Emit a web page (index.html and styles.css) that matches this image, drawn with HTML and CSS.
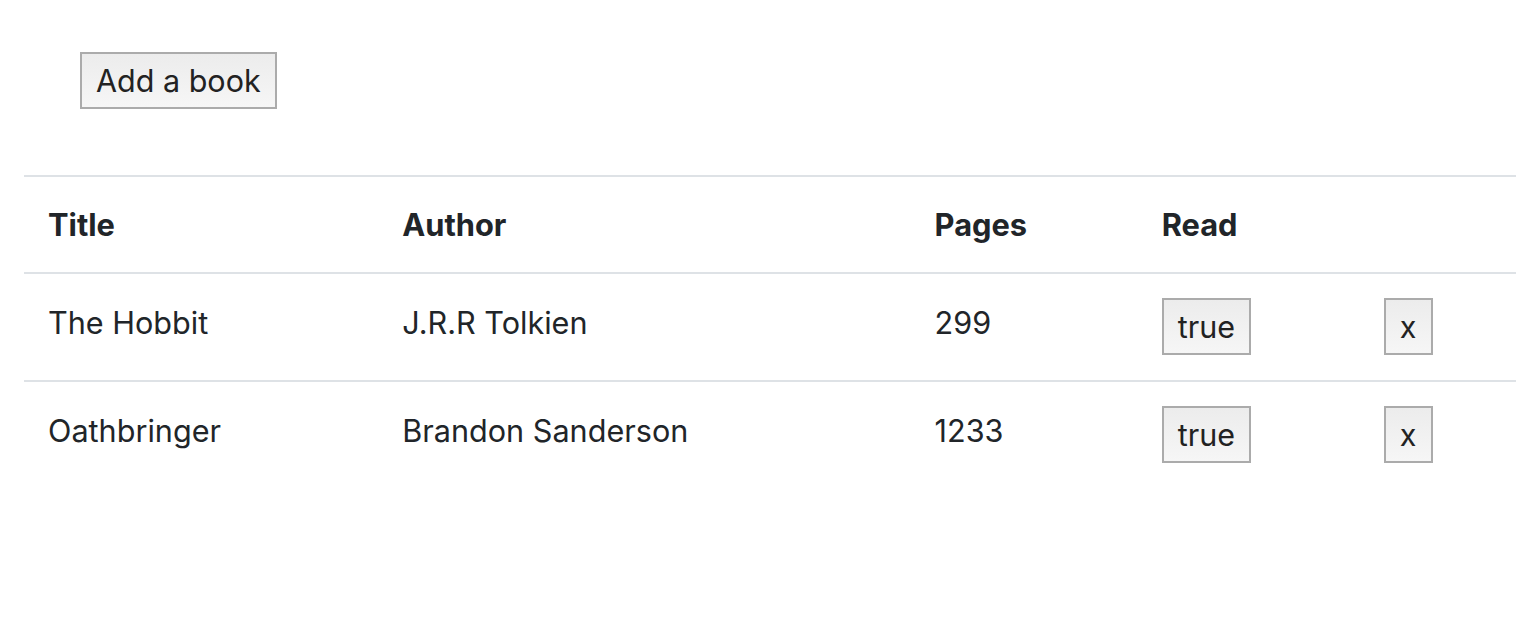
FILE: index.html
```html
<!DOCTYPE html>
<html>
<head>
<meta charset="utf-8">
<link rel="stylesheet" href="styles.css">
</head>
<body>
<div class="top">
  <button class="btn">Add a book</button>
</div>
<table class="table">
  <thead>
    <tr>
      <th class="c1">Title</th>
      <th class="c2">Author</th>
      <th class="c3">Pages</th>
      <th class="c4">Read</th>
      <th class="c5"></th>
    </tr>
  </thead>
  <tbody>
    <tr>
      <td>The Hobbit</td>
      <td>J.R.R Tolkien</td>
      <td>299</td>
      <td><button class="btn">true</button></td>
      <td><button class="btn">x</button></td>
    </tr>
    <tr>
      <td>Oathbringer</td>
      <td>Brandon Sanderson</td>
      <td>1233</td>
      <td><button class="btn">true</button></td>
      <td><button class="btn">x</button></td>
    </tr>
  </tbody>
</table>
</body>
</html>
```
FILE: styles.css
```css
html, body {
  margin: 0;
  padding: 0;
  background: #fff;
}
body {
  font-family: Inter, "Noto Sans", sans-serif;
  font-size: 30.6px;
  line-height: 48px;
  color: #212529;
}
.top {
  padding: 52px 0 0 80px;
  height: 175px;
  box-sizing: border-box;
}
.btn {
  font-family: Inter, "Noto Sans", sans-serif;
  font-size: 30.5px;
  line-height: 49px;
  color: #222;
  padding: 0 14px;
  border: 2px solid #ababab;
  border-radius: 0;
  background: linear-gradient(#ececec, #f6f6f6);
  margin: 0;
  height: 57px;
  vertical-align: top;
}
.table {
  margin: 0 22px 0 24px;
  width: 1492px;
  border-collapse: collapse;
}
.table th, .table td {
  text-align: left;
  padding: 24px;
  vertical-align: top;
  border-top: 2px solid #dee2e6;
}
.table th {
  font-weight: 700;
  font-size: 30.8px;
  padding-top: 24px;
  padding-bottom: 23px;
}
.table td {
  padding-top: 25px;
  padding-bottom: 25px;
}
.table td .btn {
  margin-top: -1px;
}
.c1 { width: 306px; }
.c2 { width: 484px; }
.c3 { width: 179px; }
.c4 { width: 174px; }
.c5 { width: 108px; }
```
